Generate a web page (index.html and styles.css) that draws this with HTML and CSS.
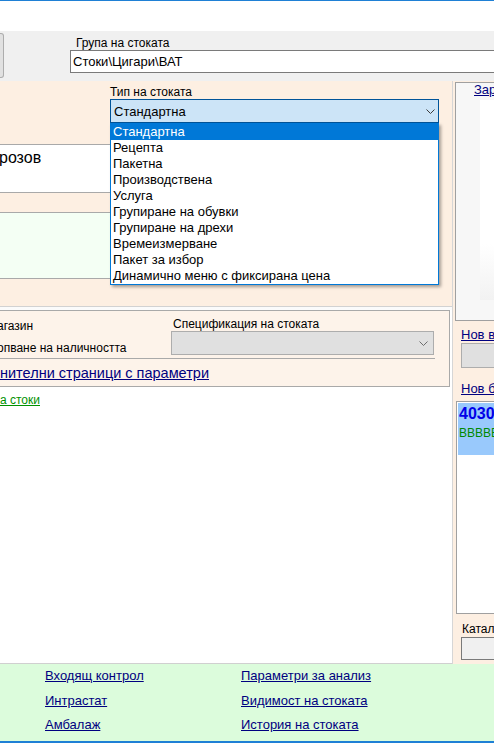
FILE: index.html
```html
<!DOCTYPE html>
<html>
<head>
<meta charset="utf-8">
<title>Стока</title>
<link rel="stylesheet" href="styles.css">
</head>
<body>
<div class="page">
  <div class="titlebar"></div>
  <div class="groupbar">
    <div class="btnstub"></div>
    <div class="groupfield">
      <div class="lbl">Група на стоката</div>
      <div class="textbox">Стоки\Цигари\ВАТ</div>
    </div>
  </div>
  <div class="main">
    <div class="leftcol">
      <div class="typesec">
        <div class="typefield">
          <div class="lbl lbl-type">Тип на стоката</div>
          <div class="combo combo-type">
            <span>Стандартна</span>
            <svg class="chev" width="9" height="5" viewBox="0 0 9 5"><polyline points="0.5,0.5 4.5,4.5 8.5,0.5" fill="none" stroke="#3c3c3c" stroke-width="1"/></svg>
          </div>
          <ul class="dropdown">
            <li class="sel">Стандартна</li>
            <li>Рецепта</li>
            <li>Пакетна</li>
            <li>Производствена</li>
            <li>Услуга</li>
            <li>Групиране на обувки</li>
            <li>Групиране на дрехи</li>
            <li>Времеизмерване</li>
            <li>Пакет за избор</li>
            <li>Динамично меню с фиксирана цена</li>
          </ul>
        </div>
        <div class="namebox">розов</div>
        <div class="mintbox"></div>
      </div>
      <div class="spacer"></div>
      <div class="optsbox">
        <div class="optsrow">
          <div class="checks">
            <div>агазин</div>
            <div>опване на наличността</div>
          </div>
          <div class="specfield">
            <div class="lbl">Спецификация на стоката</div>
            <div class="combo combo-dis">
              <span></span>
              <svg class="chev chev-dis" width="9" height="5" viewBox="0 0 9 5"><polyline points="0.5,0.5 4.5,4.5 8.5,0.5" fill="none" stroke="#6d6d6d" stroke-width="1"/></svg>
            </div>
          </div>
        </div>
        <a class="paramlink" href="#">нителни страници с параметри</a>
      </div>
      <div class="whitearea">
        <a class="greenlink" href="#">а стоки</a>
      </div>
    </div>
    <div class="rightcol">
      <div class="frame">
        <a class="link" href="#">Зар</a>
        <div class="picture"></div>
      </div>
      <a class="link rlink rlink-1" href="#">Нов в</a>
      <div class="graybox"></div>
      <a class="link rlink rlink-2" href="#">Нов б</a>
      <div class="listbox">
        <div class="listitem">
          <div class="code">4030</div>
          <div class="barcode">ВВВВВ</div>
        </div>
      </div>
      <div class="catlbl">Катало</div>
      <div class="catbox"></div>
    </div>
  </div>
  <div class="footer">
    <a class="link" href="#">Входящ контрол</a>
    <a class="link" href="#">Параметри за анализ</a>
    <a class="link" href="#">Интрастат</a>
    <a class="link" href="#">Видимост на стоката</a>
    <a class="link" href="#">Амбалаж</a>
    <a class="link" href="#">История на стоката</a>
  </div>
  <div class="bottomline"></div>
</div>
</body>
</html>
```

FILE: styles.css
```css
* { box-sizing: border-box; }
html, body { margin: 0; padding: 0; }
body {
  width: 494px;
  height: 743px;
  overflow: hidden;
  font-family: "Liberation Sans", Arial, sans-serif;
  font-size: 13px;
  color: #000;
  background: #fff;
}
a { color: #000080; text-decoration: underline; }

.page {
  width: 494px;
  height: 743px;
  overflow: hidden;
  display: flex;
  flex-direction: column;
}

.titlebar {
  flex: none;
  height: 31px;
  border-top: 1px solid #1f80d5;
  background: #fff;
}

.groupbar {
  flex: none;
  height: 50px;
  background: #f0f0f0;
  display: flex;
}
.btnstub {
  flex: none;
  width: 4px;
  height: 45px;
  margin-top: 2px;
  background: #e1e1e1;
  border: 1px solid #adadad;
  border-left: none;
  border-radius: 0 3px 3px 0;
}
.groupfield {
  flex: 1;
  margin-left: 66px;
  padding-top: 5px;
  display: flex;
  flex-direction: column;
  min-width: 0;
}
.lbl {
  font-size: 12px;
  line-height: 15px;
  height: 15px;
  white-space: nowrap;
}
.groupfield .lbl { padding-left: 6px; line-height: 14px; height: 14px; }
.textbox {
  height: 23px;
  border: 1px solid #7a7a7a;
  background: #fff;
  padding-left: 2px;
  line-height: 21px;
  margin-right: -10px;
  white-space: nowrap;
}

.main {
  flex: none;
  height: 583px;
  display: flex;
}
.leftcol {
  flex: none;
  width: 453px;
  border-right: 1px solid #d6d6d6;
  background: #fff;
  display: flex;
  flex-direction: column;
}

.typesec {
  flex: none;
  height: 226px;
  background: #fdefe2;
  border-bottom: 1px solid #d2d2d2;
}
.typefield {
  position: relative;
  margin-left: 110px;
  width: 329px;
  padding-top: 5px;
}
.lbl-type { line-height: 13px; height: 13px; }
.combo {
  height: 23px;
  border: 1px solid #005499;
  background: #cce4f7;
  padding-left: 3px;
  line-height: 21px;
  display: flex;
  justify-content: space-between;
  align-items: center;
  white-space: nowrap;
}
.combo-type { height: 24px; }
.chev { flex: none; margin-right: 3px; }
.dropdown {
  position: absolute;
  left: 0;
  top: 100%;
  width: 329px;
  margin: 0;
  padding: 0;
  list-style: none;
  background: #fff;
  border: 1px solid #0078d7;
  box-shadow: 2px 2px 3px rgba(0, 0, 0, 0.35);
  z-index: 10;
}
.dropdown li {
  height: 16px;
  line-height: 16px;
  padding-left: 2px;
  white-space: nowrap;
}
.dropdown li.sel { background: #0078d7; color: #fff; }

.namebox {
  margin-top: 21px;
  width: 320px;
  height: 49px;
  border-top: 1px solid #a9a9a9;
  border-bottom: 1px solid #a9a9a9;
  background: #fff;
  font-size: 16px;
  line-height: 18px;
  padding-top: 4px;
  text-indent: -1px;
  white-space: nowrap;
}
.mintbox {
  margin-top: 19px;
  width: 320px;
  height: 67px;
  border-top: 1px solid #a9a9a9;
  border-bottom: 1px solid #a9a9a9;
  background: #f4fff4;
}

.spacer { flex: none; height: 3px; background: #fbfbfb; }

.optsbox {
  flex: none;
  width: 450px;
  height: 77px;
  background: #fdf3ea;
  border-top: 1px solid #a9a9a9;
  border-bottom: 1px solid #a9a9a9;
  border-right: 1px solid #a9a9a9;
}
.optsrow {
  width: 435px;
  height: 48px;
  border-bottom: 1px solid #a9a9a9;
  display: flex;
}
.checks {
  flex: none;
  width: 171px;
  padding-top: 4px;
  margin-left: -3px;
  font-size: 12px;
  line-height: 22px;
  white-space: nowrap;
}
.specfield {
  flex: none;
  width: 263px;
  margin-left: 3px;
  padding-top: 6px;
}
.specfield .lbl { line-height: 14px; height: 14px; padding-left: 2px; }
.combo-dis {
  height: 24px;
  border: 1px solid #adadad;
  background: #e0e0e0;
}
.chev-dis { margin-right: 5px; }
.paramlink {
  display: block;
  font-size: 14.5px;
  line-height: 18px;
  padding-top: 5px;
  white-space: nowrap;
}

.whitearea {
  flex: none;
  height: 277px;
  border-bottom: 1px solid #d0d0d0;
  padding-top: 5px;
}
.greenlink {
  font-size: 12px;
  line-height: 15px;
  color: #009100;
}

.rightcol {
  flex: 1;
  min-width: 0;
  background: #fdefe2;
  padding-left: 2px;
  display: flex;
  flex-direction: column;
}
.frame {
  flex: none;
  margin-top: 1px;
  height: 239px;
  margin-right: -5px;
  border: 1px solid #a0a0a0;
  background: #f7f7f7;
  padding-left: 18px;
  display: flex;
  flex-direction: column;
}
.frame .link { line-height: 13px; white-space: nowrap; }
.picture {
  margin-top: 4px;
  margin-left: 6px;
  height: 200px;
  background: linear-gradient(to bottom, #ffffff 0%, #ffffff 72%, #f2f2f2 100%);
}
.link { font-size: 13px; line-height: 15px; white-space: nowrap; }
.rlink { margin-left: 6px; display: block; }
.rlink-1 { margin-top: 6px; }
.rlink-2 { margin-top: 13px; }
.graybox {
  flex: none;
  margin-top: 1px;
  margin-left: 6px;
  margin-right: -5px;
  height: 25px;
  border: 1px solid #adadad;
  background: #e0e0e0;
}
.listbox {
  flex: none;
  margin-top: 5px;
  margin-left: 1px;
  margin-right: -5px;
  height: 213px;
  border: 1px solid #a0a0a0;
  background: #fff;
  padding: 1px;
}
.listitem {
  height: 52px;
  background: #99c9fc;
  padding: 2px 0 0 1px;
  white-space: nowrap;
}
.code {
  font-size: 16px;
  font-weight: bold;
  line-height: 18px;
  color: #0000e8;
}
.barcode {
  margin-top: 4px;
  font-size: 12px;
  line-height: 13px;
  color: #008a00;
}
.catlbl {
  margin-top: 8px;
  margin-left: 7px;
  font-size: 12px;
  line-height: 14px;
  white-space: nowrap;
}
.catbox {
  flex: none;
  margin-top: 1px;
  margin-left: 6px;
  margin-right: -5px;
  height: 23px;
  border: 1px solid #7a7a7a;
  background: #f0f0f0;
}

.footer {
  flex: none;
  height: 77px;
  background: #dcfcdc;
  padding-left: 45px;
  display: grid;
  grid-template-columns: 196px auto;
  grid-auto-rows: 24.5px;
  align-content: start;
}
.footer .link { line-height: 24.5px; justify-self: start; }
.bottomline {
  flex: none;
  height: 2px;
  background: #1f80d5;
}
```
